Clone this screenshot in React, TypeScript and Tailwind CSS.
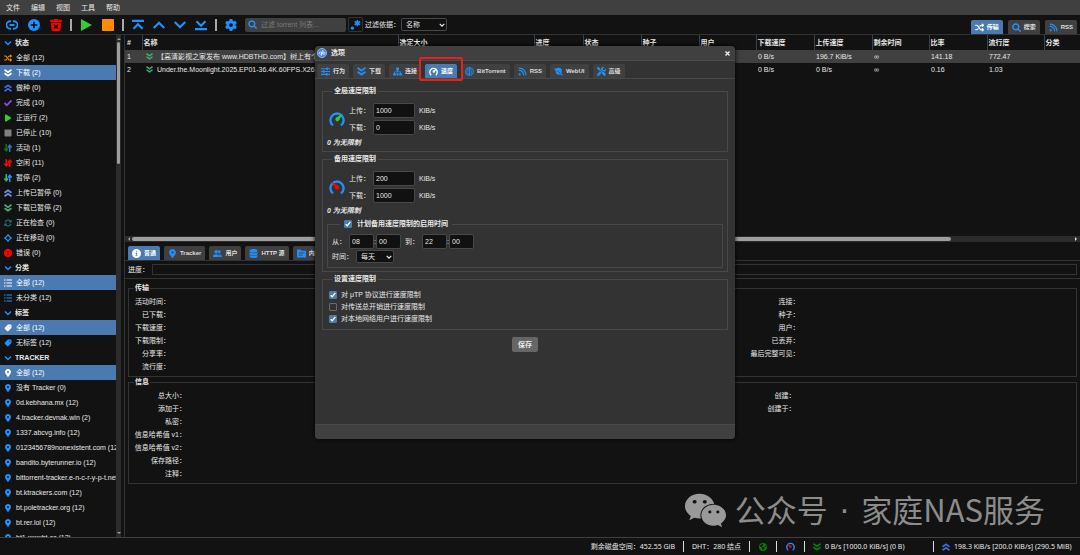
import React from "react";
import {
  FaArrowsRotate,
  FaCircleExclamation,
  FaCircleInfo,
  FaDatabase,
  FaEarthAmericas,
  FaGear,
  FaLocationDot,
  FaPlay,
  FaRss,
  FaScrewdriverWrench,
  FaShuffle,
  FaSquare,
  FaTag,
  FaUserGroup,
  FaWeixin,
} from "react-icons/fa6";

const Arrows = ({ down, up }: { down: string; up: string }) => (
  <svg viewBox="0 0 16 16" className="size-full" fill="none" strokeWidth="3">
    <path d="M4.5 0v13M.8 9l3.7 4.5L8.2 9" stroke={down} />
    <path d="M11.5 16V3M7.8 7l3.7-4.5L15.2 7" stroke={up} />
  </svg>
);

const DoubleDown = ({ color }: { color: string }) => (
  <svg viewBox="0 0 16 16" className="size-full" fill="none" stroke={color} strokeWidth="3.2">
    <path d="M1 1.5l7 5 7-5M1 8.5l7 5 7-5" />
  </svg>
);

const DoubleUp = ({ color }: { color: string }) => (
  <svg viewBox="0 0 16 16" className="size-full" fill="none" stroke={color} strokeWidth="3.2">
    <path d="M1 7.5l7-5 7 5M1 14.5l7-5 7 5" />
  </svg>
);

const CheckIcon = () => (
  <svg viewBox="0 0 16 16" className="size-full" fill="none" stroke="#8a4be0" strokeWidth="3.6">
    <path d="M1 8l4.6 4.6L15 3" />
  </svg>
);

const ListIcon = ({ color }: { color: string }) => (
  <svg viewBox="0 0 16 16" className="size-full" stroke={color} strokeWidth="2.4">
    <path d="M0 2h3M5 2h11M0 8h3M5 8h11M0 14h3M5 14h11" />
  </svg>
);

const SlidersIcon = () => (
  <svg viewBox="0 0 16 16" className="size-full" stroke="#1e90ff" strokeWidth="2">
    <path d="M0 3h16M0 8h16M0 13h16" />
    <path d="M11 .8v4.4M4.5 5.8v4.4M10 10.8v4.4" strokeWidth="3" />
  </svg>
);

const SearchIcon = () => (
  <svg viewBox="0 0 16 16" className="size-full" fill="none" stroke="#1e90ff" strokeWidth="2.6">
    <circle cx="6.8" cy="6.8" r="5.2" />
    <path d="M10.4 10.4l5 5" />
  </svg>
);

const PlusIcon = () => (
  <svg viewBox="0 0 16 16" className="size-full">
    <circle cx="8" cy="8" r="8" fill="#1e90ff" />
    <path d="M8 3.6v8.8M3.6 8h8.8" stroke="#111" strokeWidth="2.2" />
  </svg>
);

const FolderIcon = () => (
  <svg viewBox="0 0 16 16" className="size-full">
    <path d="M0 1h6l2 2h8v12H0z" fill="#1e90ff" />
    <path d="M3 7h10M3 11h7" stroke="#404040" strokeWidth="1.5" />
  </svg>
);

const Gauge = ({ ring, needle, left }: { ring: string; needle: string; left?: boolean }) => (
  <svg viewBox="0 0 16 16" className="size-full" fill="none">
    <path d="M4 14.4A6.6 6.6 0 1 1 12 14.4" stroke={ring} strokeWidth="2.4" />
    {left ? (
      <path d="M2.2 2.5L9.6 7.1A2 2 0 1 1 6.7 10Z" fill={needle} />
    ) : (
      <path d="M13.8 2.5L10 9.6A2 2 0 1 1 6.9 6.8Z" fill={needle} />
    )}
  </svg>
);

const Chevron = ({ d }: { d: string }) => (
  <svg viewBox="0 0 16 16" className="size-full" fill="none" stroke="#1e90ff" strokeWidth="3">
    <path d={d} />
  </svg>
);

const LinkIcon = () => (
  <svg viewBox="0 0 16 16" className="size-full" fill="none" stroke="#1e90ff" strokeWidth="2.4">
    <path d="M6.8 13H5.6a4.4 4.4 0 0 1 0-10h1.2M9.2 3h1.2a4.4 4.4 0 0 1 0 10H9.2M4.8 8h6.4" />
  </svg>
);

const TrashIcon = () => (
  <svg viewBox="0 0 16 16" className="size-full">
    <path d="M0 1h5l1-1h4l1 1h5v3H0zM1 5h14l-1.4 11H2.4z" fill="#f00" />
    <path d="M5.5 7.7l5 5M10.5 7.7l-5 5" stroke="#111" strokeWidth="1.9" />
  </svg>
);

const MoveIcon = () => (
  <svg viewBox="0 0 16 16" className="size-full" fill="none" stroke="#1e90ff" strokeWidth="2.4">
    <path d="M8 2L14 8 8 14 2 8z" />
    <path d="M8 0v3M8 13v3M0 8h3M13 8h3" strokeWidth="1.6" />
  </svg>
);

const NetworkIcon = () => (
  <svg viewBox="0 0 16 16" className="size-full" fill="#1e90ff">
    <path d="M5.5 1h5v5H9v2h5v3h2v4h-5v-4h1.5V9.5h-9V11H5v4H0v-4h2V8h5V6H5.5zM6 11h4v4H6z" />
  </svg>
);

const TorrentIcon = () => (
  <svg viewBox="0 0 16 16" className="size-full" fill="none" stroke="#1e90ff">
    <circle cx="8" cy="8" r="6.8" strokeWidth="1.9" />
    <path d="M5 4v6a2 2 0 0 0 4 0M11 12V6a2 2 0 0 0-4 0M8 1v14" strokeWidth="1.5" />
  </svg>
);

const WebIcon = () => (
  <svg viewBox="0 0 16 16" className="size-full" fill="#1e90ff">
    <path d="M0 3l5-1c5-2 9 0 9 5l-1 4 3 3-2 1-3-2c-5 2-8-1-8-6z" />
    <path d="M5 6l6 5" stroke="#333" />
  </svg>
);

const LogoIcon = () => (
  <svg viewBox="0 0 16 16" className="size-full">
    <circle cx="8" cy="8" r="7.3" fill="#4387d8" stroke="#9cc4f4" strokeWidth="1.3" />
    <g fill="none" stroke="#d9ebff" strokeWidth="1.3">
      <circle cx="5.4" cy="8.3" r="1.9" />
      <path d="M7.3 6v6.5M9.2 3.2v7" />
      <circle cx="11" cy="8.3" r="1.9" />
    </g>
  </svg>
);

const pin = <FaLocationDot className="size-full text-[#1e90ff]" />;

const groups = [
  {
    title: "状态",
    items: [
      { label: "全部 (12)", icon: <FaShuffle className="size-full text-[#ff8c00]" /> },
      { label: "下载 (2)", icon: <DoubleDown color="#fff" />, selected: true },
      { label: "做种 (0)", icon: <DoubleUp color="#4169e1" /> },
      { label: "完成 (10)", icon: <CheckIcon /> },
      { label: "正运行 (2)", icon: <FaPlay className="size-full text-[#32cd32]" /> },
      { label: "已停止 (10)", icon: <FaSquare className="size-full text-[#808080]" /> },
      { label: "活动 (1)", icon: <Arrows down="#008000" up="#4169e1" /> },
      { label: "空闲 (11)", icon: <Arrows down="#ff0000" up="#ff0000" /> },
      { label: "暂停 (2)", icon: <Arrows down="#3cb371" up="#1e90ff" /> },
      { label: "上传已暂停 (0)", icon: <DoubleUp color="#6495ed" /> },
      { label: "下载已暂停 (2)", icon: <DoubleDown color="#3cb371" /> },
      { label: "正在检查 (0)", icon: <FaArrowsRotate className="size-full text-[#008080]" /> },
      { label: "正在移动 (0)", icon: <MoveIcon /> },
      { label: "错误 (0)", icon: <FaCircleExclamation className="size-full text-[#ff0000]" /> },
    ],
  },
  {
    title: "分类",
    items: [
      { label: "全部 (12)", icon: <ListIcon color="#fff" />, selected: true },
      { label: "未分类 (12)", icon: <ListIcon color="#1e90ff" /> },
    ],
  },
  {
    title: "标签",
    items: [
      { label: "全部 (12)", icon: <FaTag className="size-full -scale-x-100 text-white" />, selected: true },
      { label: "无标签 (12)", icon: <FaTag className="size-full -scale-x-100 text-[#1e90ff]" /> },
    ],
  },
  {
    title: "TRACKER",
    items: [
      { label: "全部 (12)", icon: <FaLocationDot className="size-full text-white" />, selected: true },
      { label: "没有 Tracker (0)", icon: pin },
      { label: "0d.kebhana.mx (12)", icon: pin },
      { label: "4.tracker.devnak.win (2)", icon: pin },
      { label: "1337.abcvg.info (12)", icon: pin },
      { label: "0123456789nonexistent.com (12)", icon: pin },
      { label: "bandito.byterunner.io (12)", icon: pin },
      { label: "bittorrent-tracker.e-n-c-r-y-p-t.net (12)", icon: pin },
      { label: "bt.ktrackers.com (12)", icon: pin },
      { label: "bt.poletracker.org (12)", icon: pin },
      { label: "bt.rer.lol (12)", icon: pin },
      { label: "bt1.xxxxbt.cc (12)", icon: pin },
    ],
  },
];

const columns = [
  { name: "#", width: "w-[17px]" },
  { name: "名称", width: "w-[256px]" },
  { name: "选定大小", width: "w-[136px]" },
  { name: "进度", width: "w-[49px]" },
  { name: "状态", width: "w-[58px]" },
  { name: "种子", width: "w-[58px]" },
  { name: "用户", width: "w-[57px]" },
  { name: "下载速度", width: "w-[58px]" },
  { name: "上传速度", width: "w-[58px]" },
  { name: "剩余时间", width: "w-[57px]" },
  { name: "比率", width: "w-[58px]" },
  { name: "流行度", width: "w-[57px]" },
  { name: "分类", width: "" },
];

const torrents = [
  ["1", "【高清影视之家发布 www.HDBTHD.com】树上有个", "", "", "", "", "", "0 B/s", "196.7 KiB/s", "∞", "141.18", "772.47", ""],
  ["2", "Under.the.Moonlight.2025.EP01-36.4K.60FPS.X265", "", "", "", "", "", "0 B/s", "0 B/s", "∞", "0.16", "1.03", ""],
];

type TabProps = { icon: React.ReactNode; label: string; active?: boolean };

const Tab = ({ icon, label, active }: TabProps) => (
  <button
    type="button"
    className={`flex h-[14px] shrink-0 items-center gap-[3px] rounded-t-[2px] px-1 text-[6px] font-bold whitespace-nowrap ${
      active ? "bg-[#4a7ab0] text-white" : "bg-[#404040] text-[#dedede]"
    }`}
  >
    <span className="size-[9px]">{icon}</span>
    {label}
  </button>
);

const Separator = () => <span className="mx-2 h-3 w-[2px] bg-[#aaa]" />;

const ToolButton = ({ label, children }: { label: string; children: React.ReactNode }) => (
  <button type="button" aria-label={label} className="size-3">
    {children}
  </button>
);

const Sidebar = () => (
  <aside className="flex w-[121px] shrink-0 overflow-hidden">
    <nav className="min-w-0 flex-1 overflow-hidden">
      {groups.map((group) => (
        <section key={group.title}>
          <h2 className="flex h-[15px] items-center gap-[3px] pl-1 font-bold">
            <span className="size-2">
              <Chevron d="M2 5l6 6 6-6" />
            </span>
            {group.title}
          </h2>
          <ul>
            {group.items.map((item) => (
              <li key={item.label}>
                <a
                  href="#"
                  className={`flex h-[15px] items-center gap-1 overflow-hidden pl-1 whitespace-nowrap ${
                    item.selected ? "bg-[#4a7ab0] text-white" : ""
                  }`}
                >
                  <span className="size-2 shrink-0">{item.icon}</span>
                  {item.label}
                </a>
              </li>
            ))}
          </ul>
        </section>
      ))}
    </nav>
    <div className="flex w-[5px] flex-col items-center bg-[#2b2b2b] py-[2px]">
      <svg viewBox="0 0 4 4" className="size-1 shrink-0" fill="#9e9e9e">
        <path d="M0 3l2-2 2 2z" />
      </svg>
      <span className="mt-px h-[122px] w-[3px] shrink-0 rounded-full bg-[#9e9e9e]" />
      <svg viewBox="0 0 4 4" className="mt-auto size-1 shrink-0" fill="#9e9e9e">
        <path d="M0 1l2 2 2-2z" />
      </svg>
    </div>
  </aside>
);

const TorrentTable = () => (
  <div className="h-[201px] shrink-0 overflow-hidden">
    <table className="w-full table-fixed border-collapse whitespace-nowrap">
      <thead>
        <tr className="h-[15px]">
          {columns.map((column) => (
            <th
              key={column.name}
              className={`border-l border-[#404040] p-0 pl-px text-left font-bold first:border-l-0 first:pl-[2px] ${column.width}`}
            >
              {column.name}
            </th>
          ))}
        </tr>
      </thead>
      <tbody>
        {torrents.map((torrent) => (
          <tr key={torrent[0]} className="h-[13px] odd:bg-[#404040]">
            {torrent.map((value, i) => (
              <td key={columns[i].name} className="overflow-hidden p-0 pl-[2px]">
                {i === 1 ? (
                  <span className="flex items-center gap-1 pl-[2px]">
                    <span className="size-[7px] shrink-0">
                      <DoubleDown color="#3cb371" />
                    </span>
                    {value}
                  </span>
                ) : (
                  value
                )}
              </td>
            ))}
          </tr>
        ))}
      </tbody>
    </table>
  </div>
);

type DetailsProps = {
  title: string;
  left: string[];
  right: string[];
  leftWidth: string;
  rightWidth: string;
  className: string;
};

const Details = ({ title, left, right, leftWidth, rightWidth, className }: DetailsProps) => (
  <fieldset className={`mx-[3px] border border-[#333] ${className}`}>
    <legend className="ml-[5px] px-px leading-[10px] font-bold">{title}</legend>
    <div className="grid grid-cols-[13fr_7fr] pt-[2px] leading-[13px]">
      <ul className={`text-right ${leftWidth}`}>
        {left.map((label) => (
          <li key={label}>{label}</li>
        ))}
      </ul>
      <ul className={`text-right ${rightWidth}`}>
        {right.map((label) => (
          <li key={label}>{label}</li>
        ))}
      </ul>
    </div>
  </fieldset>
);

const SpeedGroup = ({
  id,
  title,
  icon,
  upload,
  download,
  children,
}: {
  id: string;
  title: string;
  icon: React.ReactNode;
  upload: string;
  download: string;
  children?: React.ReactNode;
}) => (
  <fieldset className="border border-[#484848] px-1 pb-[3px]">
    <legend className="ml-[5px] px-[2px] leading-[10px] font-bold">{title}</legend>
    <div className="flex items-center gap-1 pt-[7px] pl-[2px]">
      <span className="size-4">{icon}</span>
      <div className="flex flex-col gap-[2px]">
        {[
          { key: `${id}-up`, label: "上传：", value: upload },
          { key: `${id}-down`, label: "下载：", value: download },
        ].map((row) => (
          <div key={row.key} className="flex items-center">
            <label htmlFor={row.key} className="w-6">
              {row.label}
            </label>
            <input
              id={row.key}
              type="text"
              defaultValue={row.value}
              className="h-[15px] w-[42px] rounded-[2px] border border-[#484848] bg-[#111] px-[2px]"
            />
            <span className="ml-1">KiB/s</span>
          </div>
        ))}
      </div>
    </div>
    <p className="mt-[3px] leading-[10px] font-bold italic">0 为无限制</p>
    {children}
  </fieldset>
);

const Checkbox = ({ id, checked }: { id: string; checked?: boolean }) => (
  <span className="grid size-2 shrink-0">
    <input
      id={id}
      type="checkbox"
      defaultChecked={checked}
      className="peer col-start-1 row-start-1 size-2 appearance-none rounded-[1px] border border-[#6a6a6a] bg-[#333] checked:border-[#4a7ab0] checked:bg-[#4a7ab0]"
    />
    <svg
      viewBox="0 0 8 8"
      className="pointer-events-none col-start-1 row-start-1 hidden size-2 peer-checked:block"
      fill="none"
      stroke="#fff"
      strokeWidth="1.3"
    >
      <path d="M1.7 4.2l1.6 1.6 3-3.9" />
    </svg>
  </span>
);

const Select = ({ id, value, className }: { id: string; value: string; className: string }) => (
  <span className={`grid items-center ${className}`}>
    <select
      id={id}
      className="col-start-1 row-start-1 h-[13px] w-full appearance-none rounded-[2px] border border-[#484848] bg-[#111] pl-1"
    >
      <option>{value}</option>
    </select>
    <svg
      viewBox="0 0 8 8"
      className="pointer-events-none col-start-1 row-start-1 mr-[2px] size-[6px] justify-self-end"
      fill="none"
      stroke="#eee"
      strokeWidth="1.6"
    >
      <path d="M1 2.5l3 3 3-3" />
    </svg>
  </span>
);

const TimeInput = ({ label, value }: { label: string; value: string }) => (
  <input
    type="text"
    aria-label={label}
    defaultValue={value}
    className="h-[15px] w-[25px] rounded-[2px] border border-[#484848] bg-[#111] px-[2px]"
  />
);

const limits = [
  { id: "utp", label: "对 μTP 协议进行速度限制", checked: true },
  { id: "overhead", label: "对传送总开销进行速度限制", checked: false },
  { id: "lan", label: "对本地网络用户进行速度限制", checked: true },
];

const OptionsDialog = () => (
  <div
    role="dialog"
    aria-label="选项"
    className="absolute top-[46px] left-[315px] flex h-[393px] w-[420px] flex-col overflow-hidden rounded-[4px] bg-[#333] shadow-[0_0_4px_#000]"
  >
    <header className="flex h-[15px] shrink-0 items-center gap-1 border-b border-[#4c4c4c] bg-[#404040] px-[2px] font-bold">
      <span className="size-[10px]">
        <LogoIcon />
      </span>
      选项
      <button type="button" aria-label="关闭" className="mr-[3px] ml-auto size-[5px]">
        <svg viewBox="0 0 5 5" stroke="#eee" strokeWidth="1.4" className="size-full">
          <path d="M.5 .5l4 4M4.5 .5l-4 4" />
        </svg>
      </button>
    </header>
    <div className="flex h-[18px] shrink-0 items-end gap-1 border-b border-[#484848] px-[2px]">
      <Tab label="行为" icon={<SlidersIcon />} />
      <Tab label="下载" icon={<DoubleDown color="#1e90ff" />} />
      <Tab label="连接" icon={<NetworkIcon />} />
      <div className="relative">
        <Tab label="速度" icon={<Gauge ring="#fff" needle="#fff" />} active />
        <span className="absolute -inset-x-[6px] -top-[7px] -bottom-[3px] rounded-[2px] border-2 border-[#e5231b]" />
      </div>
      <Tab label="BitTorrent" icon={<TorrentIcon />} />
      <Tab label="RSS" icon={<FaRss className="size-full text-[#1e90ff]" />} />
      <Tab label="WebUI" icon={<WebIcon />} />
      <Tab label="高级" icon={<FaScrewdriverWrench className="size-full text-[#1e90ff]" />} />
    </div>
    <form className="flex flex-1 flex-col gap-[2px] px-[7px] pt-[7px]">
      <SpeedGroup
        id="global"
        title="全局速度限制"
        icon={<Gauge ring="#1e90ff" needle="#32cd32" />}
        upload="1000"
        download="0"
      />
      <SpeedGroup
        id="alternative"
        title="备用速度限制"
        icon={<Gauge ring="#1e90ff" needle="#f00" left />}
        upload="200"
        download="1000"
      >
        <fieldset className="mt-[3px] border border-[#484848] px-1 pb-1">
          <legend className="ml-2 flex items-center gap-[5px] px-1 leading-[10px] font-bold">
            <Checkbox id="schedule" checked />
            <label htmlFor="schedule">计划备用速度限制的启用时间</label>
          </legend>
          <div className="flex items-center pt-[5px]">
            <span className="w-[17px]">从：</span>
            <TimeInput label="开始小时" value="08" />
            <span className="w-[2px]">:</span>
            <TimeInput label="开始分钟" value="00" />
            <span className="ml-1 w-[17px]">到：</span>
            <TimeInput label="结束小时" value="22" />
            <span className="w-[2px]">:</span>
            <TimeInput label="结束分钟" value="00" />
          </div>
          <div className="flex items-center pt-px">
            <label htmlFor="days" className="w-6">
              时间：
            </label>
            <Select id="days" value="每天" className="w-[38px]" />
          </div>
        </fieldset>
      </SpeedGroup>
      <fieldset className="border border-[#484848] px-[6px] pb-1">
        <legend className="ml-[3px] px-[2px] leading-[10px] font-bold">设置速度限制</legend>
        <ul className="pt-[5px]">
          {limits.map((limit) => (
            <li key={limit.id} className="flex h-3 items-center gap-1">
              <Checkbox id={limit.id} checked={limit.checked} />
              <label htmlFor={limit.id}>{limit.label}</label>
            </li>
          ))}
        </ul>
      </fieldset>
      <button type="button" className="mt-[5px] h-[15px] w-[26px] self-center rounded-[2px] bg-[#666] font-bold">
        保存
      </button>
    </form>
    <footer className="h-[15px] shrink-0 border-t border-[#484848] bg-[#404040]" />
  </div>
);

const StatusBar = () => (
  <footer className="flex h-[18px] shrink-0 items-center justify-end border-t border-[#404040] pr-1 font-['Noto_Sans','Noto_Sans_CJK_SC',sans-serif] whitespace-nowrap">
    <span>剩余磁盘空间：452.55 GiB</span>
    <span className="mx-2 h-[11px] w-px bg-[#ddd]" />
    <span>DHT：280 结点</span>
    <span className="mx-2 h-[11px] w-px bg-[#ddd]" />
    <FaEarthAmericas className="mx-px size-2 text-[#008000]" />
    <span className="mx-2 h-[11px] w-px bg-[#ddd]" />
    <span className="mx-px size-[9px]">
      <Gauge ring="#1e90ff" needle="#f00" left />
    </span>
    <span className="mx-2 h-[11px] w-px bg-[#ddd]" />
    <span className="flex w-28 items-center gap-1">
      <span className="size-2">
        <DoubleDown color="#008000" />
      </span>
      0 B/s [1000.0 KiB/s] (0 B)
    </span>
    <span className="mx-2 h-[11px] w-px bg-[#ddd]" />
    <span className="flex w-[134px] items-center gap-1">
      <span className="size-2">
        <DoubleUp color="#4169e1" />
      </span>
      198.3 KiB/s [200.0 KiB/s] (290.5 MiB)
    </span>
  </footer>
);

const App = () => {
  return (
    <div className="relative flex h-screen flex-col overflow-hidden bg-[#121212] font-['Liberation_Sans','Noto_Sans_CJK_SC',sans-serif] text-[7px] leading-[10px] text-[#e8e8e8]">
      <nav className="flex h-[15px] shrink-0 items-center gap-[11px] bg-[#404040] pl-[6px]">
        {["文件", "编辑", "视图", "工具", "帮助"].map((menu) => (
          <a key={menu} href="#">
            {menu}
          </a>
        ))}
      </nav>

      <header className="flex h-5 shrink-0 items-center border-b border-[#333] pr-[3px] pl-[6px]">
        <div className="flex gap-[10px]">
          <ToolButton label="添加链接">
            <LinkIcon />
          </ToolButton>
          <ToolButton label="添加文件">
            <PlusIcon />
          </ToolButton>
          <ToolButton label="删除">
            <TrashIcon />
          </ToolButton>
        </div>
        <Separator />
        <div className="flex gap-[10px]">
          <ToolButton label="启动">
            <svg viewBox="0 0 12 12" className="size-full" fill="#32cd32">
              <path d="M1 0l11 6-11 6z" />
            </svg>
          </ToolButton>
          <ToolButton label="停止">
            <svg viewBox="0 0 12 12" className="size-full" fill="#ff8c00">
              <rect width="12" height="12" rx="1" />
            </svg>
          </ToolButton>
        </div>
        <Separator />
        <div className="flex gap-[9px]">
          <ToolButton label="移到顶部">
            <Chevron d="M0 2.5h16M2 13l6-6 6 6" />
          </ToolButton>
          <ToolButton label="上移">
            <Chevron d="M1 12l7-7 7 7" />
          </ToolButton>
          <ToolButton label="下移">
            <Chevron d="M1 4l7 7 7-7" />
          </ToolButton>
          <ToolButton label="移到底部">
            <Chevron d="M0 13.5h16M2 3l6 6 6-6" />
          </ToolButton>
        </div>
        <Separator />
        <ToolButton label="选项">
          <FaGear className="size-full text-[#1e90ff]" />
        </ToolButton>
        <div className="ml-2 flex h-[14px] w-[101px] items-center gap-1 rounded-[2px] bg-[#404040] pl-[3px]">
          <span className="size-[9px] shrink-0">
            <SearchIcon />
          </span>
          <input
            type="text"
            aria-label="过滤 torrent 列表"
            placeholder="过滤 torrent 列表..."
            className="min-w-0 flex-1 placeholder:text-[#7a7a7a]"
          />
        </div>
        <button
          type="button"
          aria-label="正则表达式"
          className="ml-[2px] size-[15px] rounded-[2px] border border-[#333] p-px"
        >
          <svg viewBox="0 0 12 12" className="size-full" stroke="#1e90ff" strokeWidth="1.7">
            <circle cx="2.5" cy="10" r="1" fill="#1e90ff" />
            <path d="M8 1v7M5 2.7l6 3.6M11 2.7L5 6.3" />
          </svg>
        </button>
        <label htmlFor="filter" className="ml-[2px] w-9">
          过滤依据：
        </label>
        <Select id="filter" value="名称" className="w-[46px]" />
        <div className="ml-auto flex gap-[5px] self-end">
          <Tab label="传输" icon={<FaShuffle className="size-full text-white" />} active />
          <Tab label="搜索" icon={<SearchIcon />} />
          <Tab label="RSS" icon={<FaRss className="size-full text-[#1e90ff]" />} />
        </div>
      </header>

      <div className="flex min-h-0 flex-1">
        <Sidebar />
        <main className="ml-[3px] flex min-w-0 flex-1 flex-col border-l border-[#333]">
          <TorrentTable />
          <div className="flex h-[6px] shrink-0 items-center bg-[#2b2b2b] px-[2px]">
            <svg viewBox="0 0 4 4" className="size-1" fill="#9e9e9e">
              <path d="M3 0L1 2l2 2z" />
            </svg>
            <div className="flex-1 px-px">
              <div className="h-1 w-[87%] rounded-full bg-[#9e9e9e]" />
            </div>
            <svg viewBox="0 0 4 4" className="size-1" fill="#ddd">
              <path d="M1 0l2 2-2 2z" />
            </svg>
          </div>
          <div className="flex h-[19px] shrink-0 items-end gap-1 border-b border-[#333] pl-[3px]">
            <Tab label="普通" icon={<FaCircleInfo className="size-full text-white" />} active />
            <Tab label="Tracker" icon={pin} />
            <Tab label="用户" icon={<FaUserGroup className="size-full text-[#1e90ff]" />} />
            <Tab label="HTTP 源" icon={<FaDatabase className="size-full text-[#1e90ff]" />} />
            <Tab label="内容" icon={<FolderIcon />} />
          </div>
          <div className="flex h-[18px] shrink-0 items-center border-b border-[#333] px-[3px]">
            <span className="w-6">进度：</span>
            <div className="h-[11px] flex-1 border border-[#333]" />
          </div>
          <Details
            title="传输"
            left={["活动时间：", "已下载：", "下载速度：", "下载限制：", "分享率：", "流行度："]}
            right={["连接：", "种子：", "用户：", "已丢弃：", "最后完整可见："]}
            leftWidth="w-[41px]"
            rightWidth="w-[55px]"
            className="mt-1 h-[94px]"
          />
          <Details
            title="信息"
            left={["总大小：", "添加于：", "私密：", "信息哈希值 v1：", "信息哈希值 v2：", "保存路径：", "注释："]}
            right={["创建：", "创建于："]}
            leftWidth="w-[57px]"
            rightWidth="w-[51px]"
            className="h-[107px]"
          />
        </main>
      </div>

      <StatusBar />
      <OptionsDialog />

      <div className="absolute right-[35px] bottom-[22px] flex items-center gap-2 text-[31px] leading-[44px] text-[#8c8c8c]">
        <FaWeixin className="size-[43px] text-[#999]" />
        <p className="font-['Noto_Sans_CJK_SC',sans-serif] whitespace-nowrap">
          公众号<span className="px-[2px] font-['DejaVu_Sans',sans-serif]"> · </span>家庭NAS服务
        </p>
      </div>
    </div>
  );
};

export default App;
